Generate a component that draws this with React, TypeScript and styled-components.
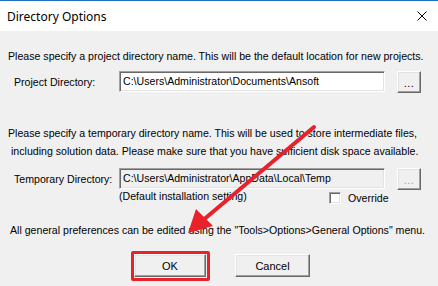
import React from 'react';
import styled, { createGlobalStyle } from 'styled-components';

const GlobalStyle = createGlobalStyle`
  html, body {
    margin: 0;
    padding: 0;
    background: #f0f0f0;
  }
  * {
    box-sizing: border-box;
  }
`;

const Window = styled.div`
  position: relative;
  width: 438px;
  height: 286px;
  background: #f0f0f0;
  overflow: hidden;
  font-family: 'Liberation Sans', Arial, sans-serif;
  font-size: 10.6px;
  color: #000;
`;

const TitleBar = styled.div`
  height: 31px;
  background: #ffffff;
  border-top: 1px solid #1e6fc8;
  display: flex;
  align-items: center;
  justify-content: space-between;
  padding: 0 6px 0 7px;
`;

const Title = styled.span`
  font-family: 'Noto Sans', 'Open Sans', sans-serif;
  font-size: 12px;
  color: #000;
`;

const CloseIcon = styled.svg`
  width: 10px;
  height: 10px;
  margin-right: 5px;
`;

const Body = styled.div`
  display: flex;
  flex-direction: column;
`;

const Para = styled.div<{ $top: number; $left?: number }>`
  margin-top: ${(p) => p.$top}px;
  padding-left: ${(p) => p.$left ?? 8}px;
  line-height: 13px;
  white-space: nowrap;
`;

const WrapPara = styled.div`
  margin-top: 31px;
  padding-left: 8px;
  line-height: 18px;
  white-space: nowrap;
`;

const Line = styled.div<{ $indent?: number }>`
  padding-left: ${(p) => p.$indent ?? 0}px;
`;

const FieldRow = styled.div`
  margin-top: 8px;
  display: grid;
  grid-template-columns: 107px 266px 24px;
  column-gap: 12px;
  align-items: start;
  height: 22px;
`;

const Label = styled.span`
  padding-left: 14px;
  line-height: 22px;
  white-space: nowrap;
`;

const PathBox = styled.div<{ $disabled?: boolean }>`
  height: 21px;
  padding: 0 3px;
  line-height: 19px;
  background: ${(p) => (p.$disabled ? '#f0f0f0' : '#ffffff')};
  border: 1px solid;
  border-color: #a0a0a0 #ffffff #ffffff #a0a0a0;
  box-shadow: inset 1px 1px 0 #696969, inset -1px -1px 0 #e3e3e3;
  white-space: nowrap;
  overflow: hidden;
`;

const RaisedButton = styled.div<{ $disabled?: boolean; $w?: number; $h?: number }>`
  width: ${(p) => p.$w ?? 24}px;
  height: ${(p) => p.$h ?? 22}px;
  display: flex;
  align-items: center;
  justify-content: center;
  background: #f0f0f0;
  border: 1px solid;
  border-color: #ffffff #696969 #696969 #ffffff;
  box-shadow: inset -1px -1px 0 #a0a0a0, inset 1px 1px 0 #e3e3e3;
  color: ${(p) => (p.$disabled ? '#a0a0a0' : '#000')};
  font-size: 11px;
`;

const Dots = styled.span`
  margin-top: 2px;
  letter-spacing: 0.5px;
`;

const SubRow = styled.div`
  display: grid;
  grid-template-columns: 210px auto;
  justify-content: start;
  align-items: start;
  height: 14px;
  padding-left: 119px;
`;

const Hint = styled.span`
  line-height: 13px;
  white-space: nowrap;
`;

const CheckLabel = styled.label`
  display: flex;
  align-items: center;
  gap: 7px;
  margin-top: 2px;
  line-height: 12px;
`;

const CheckBox = styled.span`
  width: 12px;
  height: 12px;
  background: #fff;
  border: 1px solid;
  border-color: #a0a0a0 #ffffff #ffffff #a0a0a0;
  box-shadow: inset 1px 1px 0 #696969, inset -1px -1px 0 #e3e3e3;
`;

const ButtonRow = styled.div`
  margin-top: 17px;
  display: flex;
  gap: 29px;
  padding-left: 134px;
`;

const Highlight = styled.div`
  position: relative;
  &::after {
    content: '';
    position: absolute;
    left: -3px;
    top: -3px;
    right: -4px;
    bottom: -4px;
    border: 3px solid #e8212b;
    border-radius: 2px;
  }
`;

const Arrow = styled.svg`
  position: absolute;
  left: 0;
  top: 0;
  width: 438px;
  height: 286px;
  pointer-events: none;
`;

export default function App() {
  return (
    <>
      <GlobalStyle />
      <Window>
        <TitleBar>
          <Title>Directory Options</Title>
          <CloseIcon viewBox="0 0 10 10">
            <path d="M0.5 0.5 L9.5 9.5 M9.5 0.5 L0.5 9.5" stroke="#000" strokeWidth="1" />
          </CloseIcon>
        </TitleBar>
        <Body>
          <Para $top={19}>
            Please specify a project directory name. This will be the default location for new projects.
          </Para>
          <FieldRow>
            <Label>Project Directory:</Label>
            <PathBox>C:\Users\Administrator\Documents\Ansoft</PathBox>
            <RaisedButton>
              <Dots>...</Dots>
            </RaisedButton>
          </FieldRow>
          <WrapPara>
            <Line>
              Please specify a temporary directory name. This will be used to store intermediate files,
            </Line>
            <Line $indent={3}>
              including solution data. Please make sure that you have sufficient disk space available.
            </Line>
          </WrapPara>
          <FieldRow>
            <Label>Temporary Directory:</Label>
            <PathBox $disabled>C:\Users\Administrator\AppData\Local\Temp</PathBox>
            <RaisedButton $disabled>
              <Dots>...</Dots>
            </RaisedButton>
          </FieldRow>
          <SubRow>
            <Hint>(Default installation setting)</Hint>
            <CheckLabel>
              <CheckBox />
              Override
            </CheckLabel>
          </SubRow>
          <Para $top={20} $left={10}>
            All general preferences can be edited using the "Tools&gt;Options&gt;General Options" menu.
          </Para>
          <ButtonRow>
            <Highlight>
              <RaisedButton $w={72} $h={23}>OK</RaisedButton>
            </Highlight>
            <RaisedButton $w={75} $h={23}>Cancel</RaisedButton>
          </ButtonRow>
        </Body>
        <Arrow viewBox="0 0 438 286">
          <line x1="314" y1="127" x2="202" y2="221" stroke="#e8212b" strokeWidth="4" strokeLinecap="round" />
          <polygon points="188,233 196,209 213,226" fill="#e8212b" />
        </Arrow>
      </Window>
    </>
  );
}
